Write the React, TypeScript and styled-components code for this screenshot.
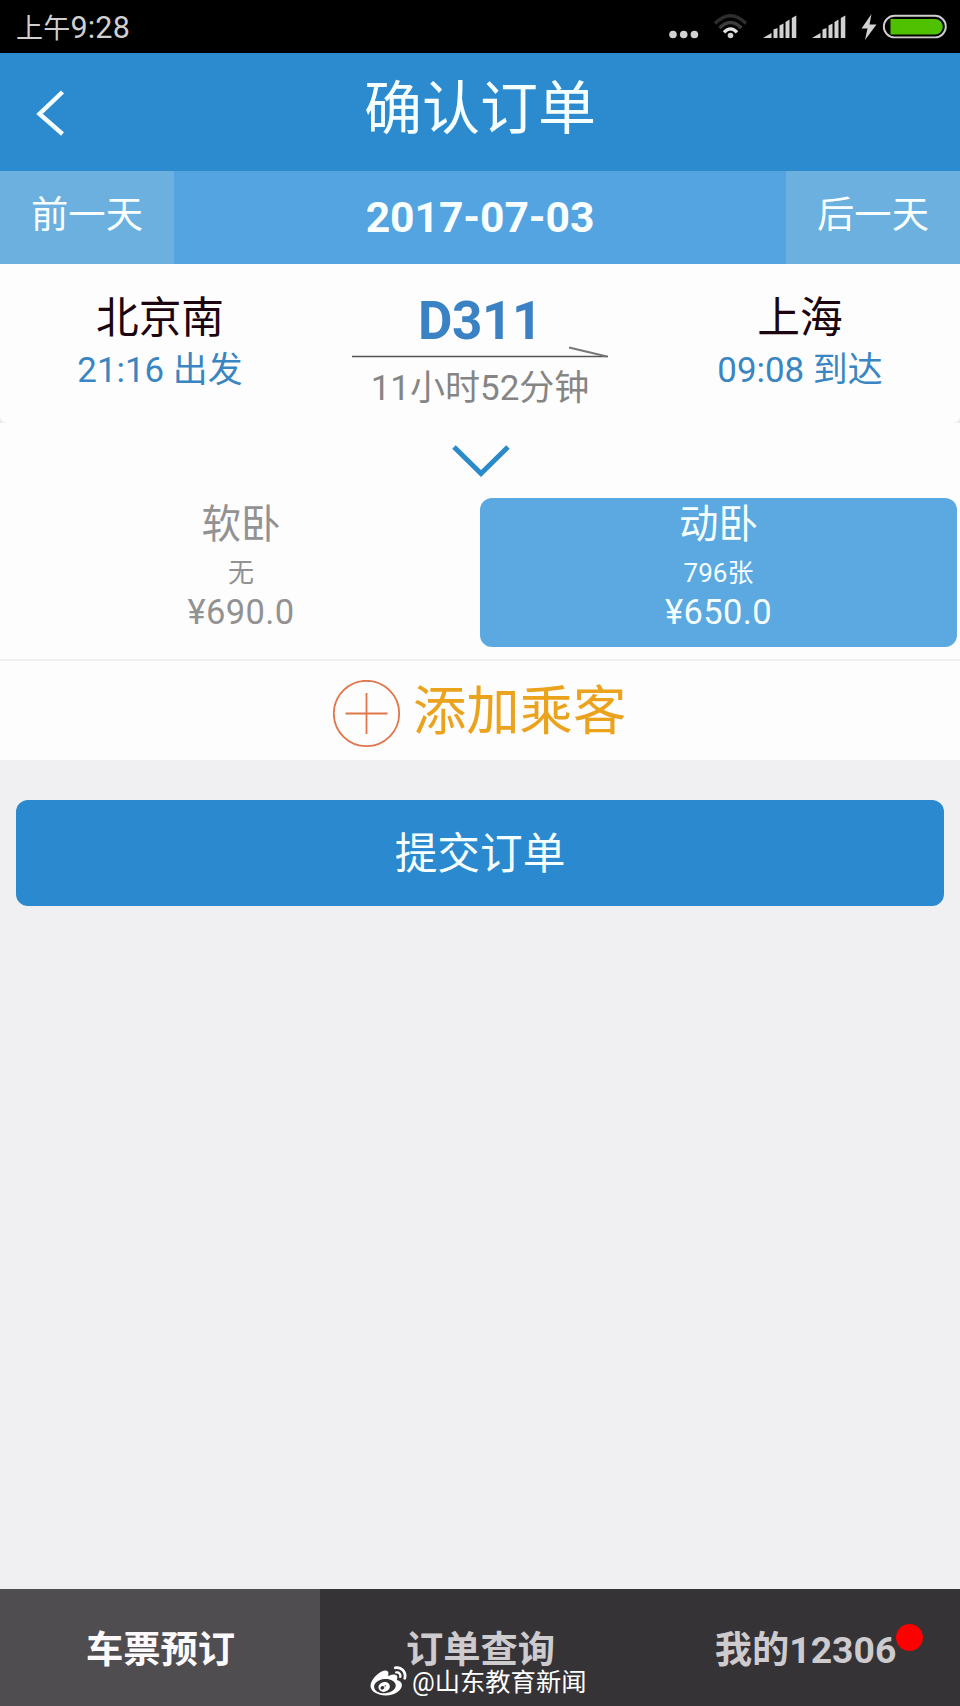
import React from "react";
import styled, { createGlobalStyle } from "styled-components";
import { FaWeibo } from "react-icons/fa";

const GlobalStyle = createGlobalStyle`
  * { box-sizing: border-box; }
  body {
    margin: 0;
    background: #f0eff2;
    font-family: Roboto, "Noto Sans CJK SC", sans-serif;
  }
`;

const Screen = styled.div`
  width: 960px;
  height: 1706px;
  display: flex;
  flex-direction: column;
  overflow: hidden;
  background: #f0eff2;
`;

const Label = styled.span<{ $size: number; $line: number; $spacing?: number; $bold?: boolean; $color?: string }>`
  display: block;
  white-space: pre;
  text-align: center;
  font-size: ${(p) => p.$size}px;
  line-height: ${(p) => p.$line}px;
  letter-spacing: ${(p) => p.$spacing ?? 0}px;
  font-weight: ${(p) => (p.$bold ? 700 : 400)};
  color: ${(p) => p.$color ?? "inherit"};
`;

const StatusBar = styled.div`
  height: 53px;
  flex: none;
  display: flex;
  justify-content: space-between;
  align-items: center;
  padding: 0 13px 0 16px;
  background: #000;
  color: #cfcfcf;
`;

const Clock = styled.span`
  font-size: 30.5px;
  line-height: 50px;
  letter-spacing: 0.2px;
  padding-top: 3px;
`;

const Meridiem = styled.span`
  font-size: 27px;
`;

const TitleBar = styled.header`
  height: 118px;
  flex: none;
  display: grid;
  grid-template-columns: 120px 1fr 120px;
  background: #2c8acf;
  color: #f6ffff;
`;

const BackButton = styled.button`
  border: 0;
  padding: 36px 0 0 36px;
  background: none;
  display: flex;
  align-items: flex-start;
`;

const DateBar = styled.div`
  height: 93px;
  flex: none;
  display: grid;
  grid-template-columns: 174px 1fr 174px;
  background: #53a4e0;
  color: #f9ffff;
`;

const DayButton = styled.div`
  background: #6bb0df;
  padding-top: 16px;
`;

const DateValue = styled.div`
  padding-top: 18px;
`;

const Sheet = styled.section`
  flex: none;
  height: 496px;
  background: #fdfdfd;
  display: flex;
  flex-direction: column;
`;

const TripBackdrop = styled.div`
  background: linear-gradient(#fdfdfd 50%, #ececee 50%);
`;

const Trip = styled.div`
  height: 159px;
  display: grid;
  grid-template-columns: repeat(3, 320px);
  background: #fdfdfd;
  border-radius: 0 0 7px 7px;
`;

const Station = styled.div`
  padding-top: 27px;
`;

const TrainInfo = styled.div`
  padding-top: 27px;
  display: flex;
  flex-direction: column;
  align-items: center;
`;

const TravelArrow = styled.svg`
  flex: none;
  margin: -9px 0 5px;
`;

const Expand = styled.div`
  height: 75px;
  display: flex;
  justify-content: center;
  padding: 22px 0 0 2px;
`;

const Seats = styled.div`
  height: 163px;
  display: grid;
  grid-template-columns: 480px 477px;
  border-bottom: 2px solid #efefef;
`;

const Seat = styled.div<{ $active?: boolean }>`
  height: 149px;
  padding-left: ${(p) => (p.$active ? 0 : 2)}px;
  border-radius: 12px;
  background: ${(p) => (p.$active ? "#5ba9e0" : "transparent")};
  color: ${(p) => (p.$active ? "#f6ffff" : "#929292")};
`;

const AddPassenger = styled.div`
  flex: 1;
  display: flex;
  gap: 12px;
  padding: 19px 0 0 333px;
`;

const Submit = styled.button`
  flex: none;
  height: 106px;
  margin: 40px 16px 0;
  padding: 1px 0 0;
  border: 0;
  border-radius: 12px;
  background: #2b8acf;
  color: #f6ffff;
  font-family: inherit;
`;

const TabBar = styled.nav`
  position: relative;
  flex: none;
  height: 117px;
  margin-top: auto;
  display: grid;
  grid-template-columns: repeat(3, 320px);
  background: #353336;
`;

const Tab = styled.div<{ $active?: boolean }>`
  display: flex;
  justify-content: center;
  padding: 33px 0 0 1px;
  background: ${(p) => (p.$active ? "#4f4d50" : "transparent")};
  color: ${(p) => (p.$active ? "#fbf9fc" : "#cdcbce")};
`;

const Badged = styled.div`
  position: relative;
  left: 5px;
  height: 60px;
`;

const Dot = styled.i`
  position: absolute;
  right: -27px;
  top: 2px;
  width: 27px;
  height: 27px;
  border-radius: 50%;
  background: #fe0000;
`;

const Credit = styled.div`
  position: absolute;
  left: 370px;
  bottom: 5px;
  display: flex;
  align-items: center;
  gap: 5px;
  color: #fff;
`;

const WeiboMark = styled(FaWeibo)`
  width: 37px;
  height: 36px;
  margin-top: -3px;
`;

const StatusIcons = () => (
  <svg width="284" height="53" viewBox="663 0 284 53" fill="#d2d2d2">
    <circle cx="673" cy="34.5" r="3.8" />
    <circle cx="683.7" cy="34.5" r="3.8" />
    <circle cx="694.4" cy="34.5" r="3.8" />
    <g fill="none" strokeWidth="3.4">
      <path d="M715 23.5Q730.5 8 746 23.5" stroke="#2d2d2d" />
      <path d="M719.5 28Q730.5 17 741.5 28" stroke="#3c3c3c" />
      <path d="M724 32.3Q730.5 25.5 737 32.3" stroke="#e2e2e2" />
    </g>
    <circle cx="730.5" cy="35.5" r="2.8" />
    {[763, 812].map((x) => (
      <g key={x} transform={`translate(${x} 0)`}>
        <path d="M0 38L8.5 33V38Z" />
        <path d="M10.5 38V29.5L14.5 28V38Z" />
        <path d="M16.5 38V25.5L20.5 23.5V38Z" />
        <path d="M22.5 38V22L26.5 19.5V38Z" />
        <path d="M28.8 38V18L33.3 15.5V38Z" />
      </g>
    ))}
    <path d="M871.5 14L861.5 28.5H867.5L865 40L876.5 24.5H869.5Z" />
    <rect x="883.8" y="15.8" width="62" height="21.6" rx="10.8" fill="none" stroke="#cfcfcf" strokeWidth="1.9" />
    <path d="M890.5 19H935A7.8 7.8 0 0 1 935 34.6H890.5Z" fill="#4fc100" />
  </svg>
);

const seats = [
  { name: "软卧", left: "无", price: "¥690.0" },
  { name: "动卧", left: "796张", price: "¥650.0", active: true },
];

export default function App() {
  return (
    <Screen>
      <GlobalStyle />
      <StatusBar>
        <Clock><Meridiem>上午</Meridiem>9:28</Clock>
        <StatusIcons />
      </StatusBar>
      <TitleBar>
        <BackButton aria-label="返回">
          <svg width="30" height="48" viewBox="0 0 30 48" fill="none" stroke="#f6ffff" strokeWidth="4.4">
            <path d="M26.5 3L3.5 25L26.5 45" />
          </svg>
        </BackButton>
        <Label $size={58} $line={112}>确认订单</Label>
      </TitleBar>
      <DateBar>
        <DayButton><Label $size={37.3} $line={57}>前一天</Label></DayButton>
        <DateValue><Label $size={42.7} $line={56} $spacing={-0.1} $bold>2017-07-03</Label></DateValue>
        <DayButton><Label $size={37.3} $line={57}>后一天</Label></DayButton>
      </DateBar>
      <Sheet>
        <TripBackdrop>
          <Trip>
            <Station>
              <Label $size={42.7} $line={54} $color="#1c0410">北京南</Label>
              <Label $size={34.9} $line={51} $color="#3a86c2">21:16 出发</Label>
            </Station>
            <TrainInfo>
              <Label $size={53} $line={60} $spacing={-0.4} $bold $color="#3a82c3">D311</Label>
              <TravelArrow width="256" height="18" viewBox="0 0 256 18" fill="none" stroke="#555">
                <path d="M0 14.5H256" strokeWidth="1.6" />
                <path d="M217 5.5L255 14.5" strokeWidth="2" stroke="#777" />
              </TravelArrow>
              <Label $size={35} $line={48} $color="#858585">11小时52分钟</Label>
            </TrainInfo>
            <Station>
              <Label $size={42.7} $line={54} $color="#1c0410">上海</Label>
              <Label $size={34.9} $line={51} $color="#3a86c2">09:08 到达</Label>
            </Station>
          </Trip>
        </TripBackdrop>
        <Expand>
          <svg width="58" height="36" viewBox="0 0 58 36" fill="none" stroke="#2b8bc9" strokeWidth="5">
            <path d="M2 2L29 28.5L56 2" />
          </svg>
        </Expand>
        <Seats>
          {seats.map((s) => (
            <Seat key={s.name} $active={s.active}>
              <Label $size={39.5} $line={54}>{s.name}</Label>
              <Label $size={26} $line={42}>{s.left}</Label>
              <Label $size={34.5} $line={36} $spacing={0.4}>{s.price}</Label>
            </Seat>
          ))}
        </Seats>
        <AddPassenger>
          <svg width="68" height="68" viewBox="0 0 68 68" fill="none" stroke="#e0764a" strokeWidth="1.8">
            <circle cx="33.5" cy="33.5" r="32.7" />
            <path d="M12.5 33.5H54.5M33.5 13V54" />
          </svg>
          <Label $size={53.3} $line={65} $color="#eba21c">添加乘客</Label>
        </AddPassenger>
      </Sheet>
      <Submit>
        <Label $size={42.7} $line={60}>提交订单</Label>
      </Submit>
      <TabBar>
        <Tab $active><Label $size={37.3} $line={57} $bold>车票预订</Label></Tab>
        <Tab><Label $size={37.3} $line={57} $bold>订单查询</Label></Tab>
        <Tab>
          <Badged>
            <Label $size={37.3} $line={57} $bold>我的12306</Label>
            <Dot />
          </Badged>
        </Tab>
        <Credit>
          <WeiboMark />
          <Label $size={25.3} $line={36}>@山东教育新闻</Label>
        </Credit>
      </TabBar>
    </Screen>
  );
}
